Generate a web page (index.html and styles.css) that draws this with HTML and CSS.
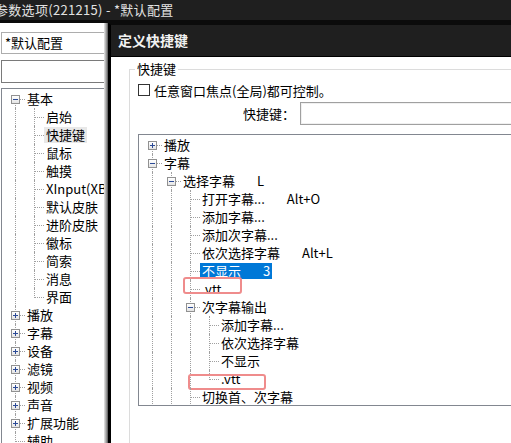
FILE: index.html
```html
<!DOCTYPE html>
<html lang="zh-CN">
<head>
<meta charset="utf-8">
<title>参数选项</title>
<link rel="stylesheet" href="styles.css">
</head>
<body>
<div class="app">
  <div class="app-title">参数选项(221215) - *默认配置</div>
  <div class="main">
    <div class="side">
      <div class="combo">*默认配置</div>
      <div class="search"></div>
      <div class="tree side-tree">
        <div class="row"><span class="g f"><span class="tg"></span></span><span class="lb">基本</span></div>
        <div class="row"><span class="g v"></span><span class="g t"></span><span class="lb">启始</span></div>
        <div class="row"><span class="g v"></span><span class="g t"></span><span class="lb cur">快捷键</span></div>
        <div class="row"><span class="g v"></span><span class="g t"></span><span class="lb">鼠标</span></div>
        <div class="row"><span class="g v"></span><span class="g t"></span><span class="lb">触摸</span></div>
        <div class="row"><span class="g v"></span><span class="g t"></span><span class="lb">XInput(XBOX)</span></div>
        <div class="row"><span class="g v"></span><span class="g t"></span><span class="lb">默认皮肤</span></div>
        <div class="row"><span class="g v"></span><span class="g t"></span><span class="lb">进阶皮肤</span></div>
        <div class="row"><span class="g v"></span><span class="g t"></span><span class="lb">徽标</span></div>
        <div class="row"><span class="g v"></span><span class="g t"></span><span class="lb">简索</span></div>
        <div class="row"><span class="g v"></span><span class="g t"></span><span class="lb">消息</span></div>
        <div class="row"><span class="g v"></span><span class="g l"></span><span class="lb">界面</span></div>
        <div class="row"><span class="g t"><span class="tg plus"></span></span><span class="lb">播放</span></div>
        <div class="row"><span class="g t"><span class="tg plus"></span></span><span class="lb">字幕</span></div>
        <div class="row"><span class="g t"><span class="tg plus"></span></span><span class="lb">设备</span></div>
        <div class="row"><span class="g t"><span class="tg plus"></span></span><span class="lb">滤镜</span></div>
        <div class="row"><span class="g t"><span class="tg plus"></span></span><span class="lb">视频</span></div>
        <div class="row"><span class="g t"><span class="tg plus"></span></span><span class="lb">声音</span></div>
        <div class="row"><span class="g t"><span class="tg plus"></span></span><span class="lb">扩展功能</span></div>
        <div class="row"><span class="g t"></span><span class="lb">辅助</span></div>
      </div>
    </div>
    <div class="shade"></div>
    <div class="dialog">
      <div class="dlg-title">定义快捷键</div>
      <div class="dlg-body">
        <fieldset class="grp">
          <legend>快捷键</legend>
          <div class="chk-row"><span class="chk"></span><span>任意窗口焦点(全局)都可控制。</span></div>
          <div class="key-row"><span class="key-label">快捷键：</span><span class="key-input"></span></div>
          <div class="tree dlg-tree">
            <div class="row"><span class="g f"><span class="tg plus"></span></span><span class="lb">播放</span></div>
            <div class="row"><span class="g t"><span class="tg"></span></span><span class="lb">字幕</span></div>
            <div class="row"><span class="g v"></span><span class="g t"><span class="tg"></span></span><span class="lb">选择字幕<span class="k">L</span></span></div>
            <div class="row"><span class="g v"></span><span class="g v"></span><span class="g t"></span><span class="lb">打开字幕...<span class="k">Alt+O</span></span></div>
            <div class="row"><span class="g v"></span><span class="g v"></span><span class="g t"></span><span class="lb">添加字幕...</span></div>
            <div class="row"><span class="g v"></span><span class="g v"></span><span class="g t"></span><span class="lb">添加次字幕...</span></div>
            <div class="row"><span class="g v"></span><span class="g v"></span><span class="g t"></span><span class="lb">依次选择字幕<span class="k">Alt+L</span></span></div>
            <div class="row"><span class="g v"></span><span class="g v"></span><span class="g t"></span><span class="lb sel">不显示<span class="k">3</span></span></div>
            <div class="row"><span class="g v"></span><span class="g v"></span><span class="g t"></span><span class="lb">.vtt</span><span class="mark m1"></span></div>
            <div class="row"><span class="g v"></span><span class="g v"></span><span class="g t"><span class="tg"></span></span><span class="lb">次字幕输出</span></div>
            <div class="row"><span class="g v"></span><span class="g v"></span><span class="g v"></span><span class="g t"></span><span class="lb">添加字幕...</span></div>
            <div class="row"><span class="g v"></span><span class="g v"></span><span class="g v"></span><span class="g t"></span><span class="lb">依次选择字幕</span></div>
            <div class="row"><span class="g v"></span><span class="g v"></span><span class="g v"></span><span class="g t"></span><span class="lb">不显示</span></div>
            <div class="row"><span class="g v"></span><span class="g v"></span><span class="g v"></span><span class="g l"></span><span class="lb">.vtt</span><span class="mark m2"></span></div>
            <div class="row"><span class="g v"></span><span class="g v"></span><span class="g t"></span><span class="lb">切换首、次字幕</span></div>
          </div>
        </fieldset>
      </div>
    </div>
  </div>
</div>
</body>
</html>
```

FILE: styles.css
```css
* { box-sizing: border-box; }
html, body { margin: 0; padding: 0; }
body {
  width: 511px;
  height: 443px;
  overflow: hidden;
  background: #fff;
  color: #000;
  font-family: "Noto Sans CJK SC", "Noto Sans", sans-serif;
  font-size: 13px;
}
.app { display: flex; flex-direction: column; height: 443px; }
.app-title {
  flex: none;
  height: 23px;
  background: #1f1f1f;
  border-bottom: 3px solid #0b0b0b;
  color: #e2e2e2;
  line-height: 19px;
  letter-spacing: 0.3px;
  text-indent: -5px;
  white-space: nowrap;
  overflow: hidden;
}
.main { flex: 1; display: flex; min-height: 0; }

/* left pane */
.side {
  flex: none;
  width: 104px;
  padding: 9px 0 0 1px;
  display: flex;
  flex-direction: column;
  overflow: hidden;
}
.combo {
  flex: none;
  width: 120px;
  height: 22px;
  border: 1px solid #adadad;
  padding-left: 3px;
  line-height: 20px;
}
.search {
  flex: none;
  width: 120px;
  height: 23px;
  margin-top: 6px;
  border: 1px solid #7a7a7a;
}
.side-tree {
  flex: 1;
  margin-top: 5px;
  width: 130px;
  border: 1px solid #828790;
  border-right: none;
  border-bottom: none;
}
.shade {
  flex: none;
  width: 4px;
  background: linear-gradient(to right, #e8e8e8, #9a9a9a 60%, #555);
}

/* dialog */
.dialog {
  flex: 1;
  min-width: 0;
  display: flex;
  flex-direction: column;
  border-left: 3px solid #000;
  border-top: 2px solid #0b0b0b;
  overflow: hidden;
  background: #fff;
}
.dlg-title {
  flex: none;
  height: 32px;
  background: #1f1f1f;
  border-bottom: 1px solid #000;
  color: #f2f2f2;
  font-size: 14px;
  font-weight: bold;
  line-height: 31px;
  padding-left: 7px;
}
.dlg-body { flex: 1; padding-left: 18px; }
.grp {
  margin: 3px 0 0;
  padding: 0 0 0 8px;
  width: 500px;
  height: 500px;
  border: 1px solid #dcdcdc;
  border-right: none;
  border-bottom: none;
  min-width: 0;
}
.grp legend {
  padding: 0 2px;
  margin-left: -3px;
  line-height: 18px;
}
.chk-row {
  display: flex;
  align-items: center;
  gap: 4px;
  height: 16px;
  margin-top: 4px;
  white-space: nowrap;
}
.chk {
  flex: none;
  width: 12px;
  height: 12px;
  border: 1px solid #333;
  background: #fff;
}
.key-row {
  display: flex;
  align-items: center;
  height: 23px;
  margin-top: 4px;
}
.key-label { margin-left: 105px; white-space: nowrap; }
.key-input {
  flex: none;
  width: 300px;
  height: 23px;
  margin-left: 5px;
  border: 1px solid #a0a0a0;
  box-shadow: inset 0 0 0 1px #f0f0f0;
}
.dlg-tree {
  margin-top: 9px;
  width: 400px;
  height: 272px;
  border: 1px solid #828790;
  border-right: none;
  overflow: hidden;
}

/* tree view */
.tree { padding: 1px 0 0 4px; }
.row {
  position: relative;
  display: flex;
  align-items: center;
  height: 18px;
  white-space: nowrap;
}
.g { position: relative; flex: none; width: 19px; height: 18px; }
.g.v::before, .g.t::before, .g.l::before, .g.f::before {
  content: "";
  position: absolute;
  left: 9px;
  top: 0;
  bottom: 0;
  border-left: 1px dotted #a0a0a0;
}
.g.l::before { bottom: auto; height: 10px; }
.g.f::before { top: 9px; }
.g.t::after, .g.l::after, .g.f::after {
  content: "";
  position: absolute;
  left: 10px;
  top: 9px;
  width: 9px;
  border-top: 1px dotted #a0a0a0;
}
.tg {
  position: absolute;
  left: 5px;
  top: 5px;
  width: 9px;
  height: 9px;
  z-index: 1;
  border: 1px solid #919191;
  background: linear-gradient(#ffffff, #e4e4e4);
}
.tg::before {
  content: "";
  position: absolute;
  left: 1px;
  top: 3px;
  width: 5px;
  height: 1px;
  background: #2b4a96;
}
.tg.plus::after {
  content: "";
  position: absolute;
  left: 3px;
  top: 1px;
  width: 1px;
  height: 5px;
  background: #2b4a96;
}
.lb { padding: 0 2px; line-height: 16px; height: 16px; }
.lb.cur { background: #e8e8e8; }
.lb.sel { background: #0078d7; color: #fff; }
.k { margin-left: 22px; }

/* annotation marks drawn over the tree */
.mark {
  position: absolute;
  border: 2px solid #ef8c8c;
  border-radius: 3px;
}
.mark.m1 { left: 40px; top: -3px; width: 59px; height: 17px; }
.mark.m2 { left: 45px; top: 4px; width: 78px; height: 16px; }
```
